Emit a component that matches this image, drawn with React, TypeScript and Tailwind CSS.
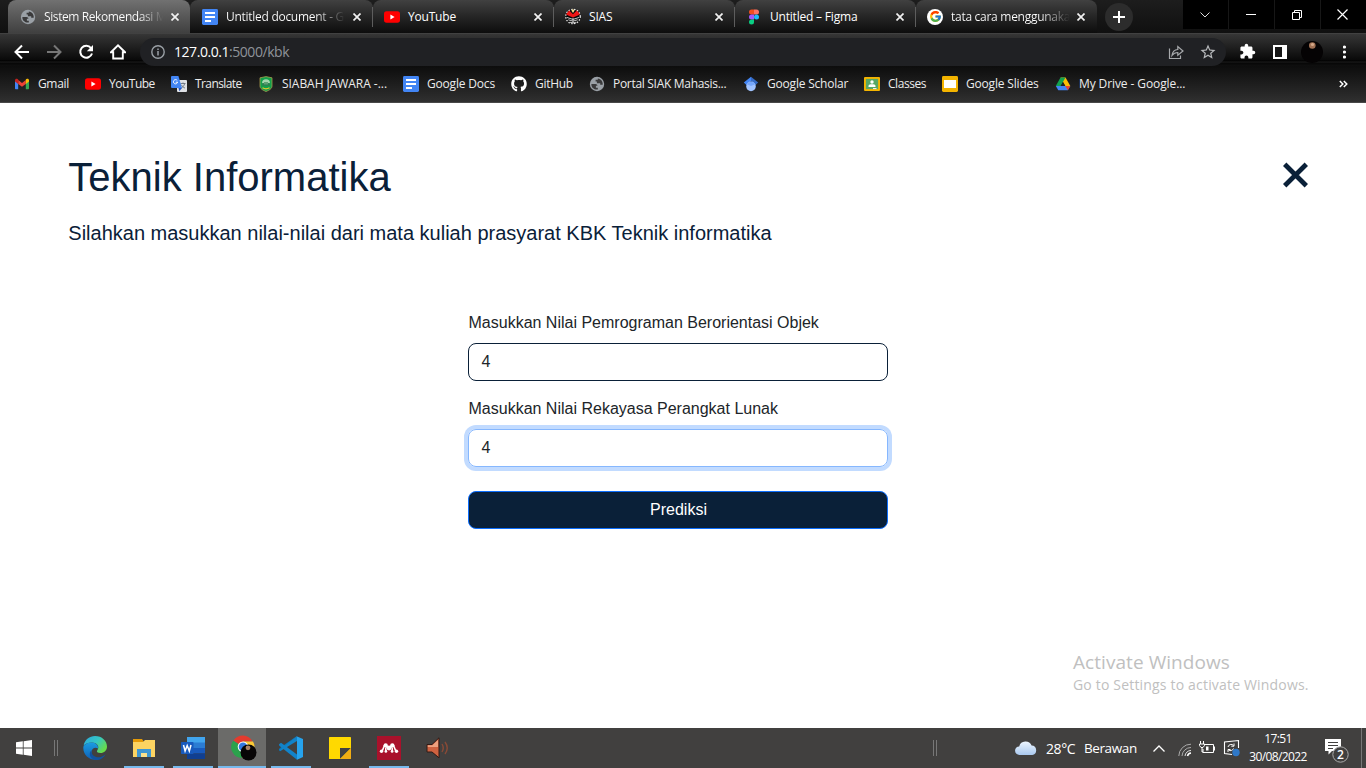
import React from "react";
import { FcGoogle } from "react-icons/fc";
import { FaGithub } from "react-icons/fa";
import { MdExtension, MdStarBorder } from "react-icons/md";

function Globe() {
  return (
    <svg width="16" height="16" viewBox="0 0 16 16" className="shrink-0">
      <circle cx="8" cy="8" r="7.2" fill="#9aa0a6" />
      <path d="M2.4 8h4c1.400 0 2 .8 2 1.800h-1.500v2H8.800v1.700C5 14 2.200 11.400 2.400 8z" fill="#3a3a3b" />
      <path d="M8.800 2.500v1.200H6.600v1.900h1.300v1.600h3.300v1.600h2.500C14 5.500 12 2.800 8.800 2.500z" fill="#3a3a3b" />
    </svg>
  );
}

function Docs() {
  return (
    <svg width="16" height="16" viewBox="0 0 16 16" className="shrink-0">
      <rect width="16" height="16" rx="1.4" fill="#4285f4" />
      <path d="M3 3h10v2H3zM3 7h10v2H3zM3 11h6v2H3z" fill="#fff" />
    </svg>
  );
}

function YouTube() {
  return (
    <svg width="16" height="16" viewBox="0 0 16 16" className="shrink-0">
      <rect y="2.3" width="16" height="11.4" rx="2.6" fill="#f00" />
      <path d="M6.4 5.6v4.8L10.6 8z" fill="#fff" />
    </svg>
  );
}

function Sias() {
  return (
    <svg width="16" height="17" viewBox="0 0 17 17" className="shrink-0">
      <circle cx="8.5" cy="8.5" r="7.700" fill="#080808" stroke="#eee" strokeWidth="1.300" strokeDasharray="1.6 1.5" />
      <path d="M1 6 L4.500 2 L8.500 6 L12.500 2 L16 6 L13 7.700 L8.500 9.600 L4 7.700Z" fill="#f01616" />
      <path d="M6.800 2.200 L8.500 4.800 L10.200 2.200 L8.500 .5Z" fill="#f7dc8a" />
      <path d="M2 9.500 L8.500 11.600 L15 9.500 M3.500 12 L8.500 13.400 L13.500 12 M5 14.500 L8.500 15.300 L12 14.500 M8.500 10v6" stroke="#cfcfcf" fill="none" />
    </svg>
  );
}

function Figma() {
  return (
    <svg width="16" height="16" viewBox="0 0 16 16" className="shrink-0">
      <path d="M8 .5H5.5a2.5 2.5 0 0 0 0 5H8z" fill="#f24e1e" />
      <path d="M8 .5h2.5a2.5 2.5 0 0 1 0 5H8z" fill="#ff7262" />
      <path d="M8 5.5H5.5a2.5 2.5 0 0 0 0 5H8z" fill="#a259ff" />
      <circle cx="10.5" cy="8" r="2.5" fill="#1abcfe" />
      <path d="M8 10.5H5.5A2.5 2.5 0 1 0 8 13z" fill="#0acf83" />
    </svg>
  );
}

function GoogleRound() {
  return (
    <span className="flex size-4 shrink-0 items-center justify-center rounded-full bg-white">
      <FcGoogle size={13} />
    </span>
  );
}

function Gmail() {
  return (
    <svg width="16" height="16" viewBox="0 0 16 16">
      <path d="M1 4v8.2c0 .6.4 1 1 1h2.2V6.4z" fill="#4285f4" />
      <path d="M15 4v8.2c0 .6-.4 1-1 1h-2.2V6.4z" fill="#34a853" />
      <path d="M4.2 4.1 8 7l3.8-2.9v3.8L8 10.8 4.2 7.9z" fill="#ea4335" />
      <path d="M1 4.2c0-1.4 1.5-2 2.5-1.2l.7.6v4.3L1 5.6z" fill="#c5221f" />
      <path d="M15 4.2c0-1.4-1.5-2-2.5-1.2l-.7.6v4.3L15 5.6z" fill="#fbbc04" />
    </svg>
  );
}

function Translate() {
  return (
    <svg width="16" height="16" viewBox="0 0 16 16">
      <rect x="6" y="4" width="10" height="12" rx="1" fill="#dfe1e5" />
      <path d="M9.5 7.5h5M12 6.5v1M13.6 7.8c-.6 2.2-2 3.6-3.6 4.2M10.4 8.8c.8 1.6 2 2.6 3.6 3.3" stroke="#68727e" fill="none" strokeWidth=".9" />
      <path d="M1 0h6.4l3.6 12H1a1 1 0 0 1-1-1V1a1 1 0 0 1 1-1z" fill="#4285f4" />
      <path d="M7.5 12H11l-2.6 3.2z" fill="#2457c5" />
      <path d="M6.3 4.6A2.1 2.1 0 1 0 6.6 6.2H4.7" stroke="#fff" fill="none" strokeWidth="1" />
    </svg>
  );
}

function Shield() {
  return (
    <svg width="16" height="16" viewBox="0 0 16 16">
      <path d="M2 1.800 8 .6l6 1.200V10c0 2.700-2.800 4.200-6 5.500C4.800 14.200 2 12.700 2 10z" fill="#12a04a" stroke="#a89b4c" strokeWidth=".8" />
      <path d="M4 7.200a4 4 0 0 1 8 0z" fill="#a5d6ae" />
      <path d="M4.200 7.200h7.600v2.600H4.200z" fill="#2f7f52" />
      <path d="M6 6h4v2.500H6z" fill="#5f9f74" />
      <path d="M4.500 11.800q3.500 2 7 0" stroke="#e4c72e" strokeWidth="1.300" fill="none" />
    </svg>
  );
}

function Scholar() {
  return (
    <svg width="16" height="16" viewBox="0 0 16 16">
      <path d="M8 .8.8 6.400 4 9.400 8 5z" fill="#4285f4" />
      <path d="m8 .8 7.200 5.600L12 9.400 8 5z" fill="#356ac3" />
      <circle cx="8" cy="10.400" r="4.800" fill="#a0c3ff" />
      <path d="M3.700 8.300a4.800 4.800 0 0 1 8.600 0L8 10z" fill="#76a7fa" />
    </svg>
  );
}

function Classes() {
  return (
    <svg width="16" height="16" viewBox="0 0 16 16">
      <rect y="1" width="16" height="14" rx="1" fill="#f4b400" />
      <rect x="1.900" y="2.900" width="12.200" height="10.200" fill="#57a765" />
      <circle cx="8" cy="6" r="1.700" fill="#fff" />
      <path d="M4.500 11V9.900C4.500 8.500 6.500 8.200 8 8.200s3.500.3 3.500 1.700V11z" fill="#fff" />
      <path d="M9 12h3.500v1.100H9z" fill="#eee" />
    </svg>
  );
}

function Slides() {
  return (
    <svg width="16" height="16" viewBox="0 0 16 16">
      <rect width="16" height="16" rx="1.400" fill="#f4b400" />
      <rect x="2" y="4" width="12" height="8" fill="#fff" />
    </svg>
  );
}

function Drive() {
  return (
    <svg width="16" height="16" viewBox="0 0 16 16">
      <path d="M5.500 1.500h5l4.800 8.500h-5z" fill="#fbbc04" />
      <path d="M5.500 1.500h5L5.600 10H.8z" fill="#12a150" />
      <path d="M.8 10h14.500l-2.500 4.300H3.300z" fill="#4285f4" />
      <path d="M10.300 10h5l-2.500 4.300z" fill="#ea4335" />
      <path d="M8 6.200 10.200 10H5.800z" fill="#222" />
    </svg>
  );
}

function Cross({ className = "" }: { className?: string }) {
  return (
    <svg width="8" height="8" viewBox="0 0 8 8" className={className}>
      <path d="M.5.5l7 7M7.500.5l-7 7" stroke="#f1f1f1" strokeWidth="1.700" />
    </svg>
  );
}

const tabs = [
  { icon: <Docs />, text: "Untitled document - G", fade: true },
  { icon: <YouTube />, text: "YouTube", fade: false },
  { icon: <Sias />, text: "SIAS", fade: false },
  { icon: <Figma />, text: "Untitled – Figma", fade: false },
  { icon: <GoogleRound />, text: "tata cara menggunaka", fade: true },
];

function TabStrip() {
  return (
    <div className="flex h-[33px] bg-gradient-to-b from-[#1d1d1d] to-[#101010] pl-2 text-[12px] tracking-[-0.28px]">
      <div className="flex h-[33px] w-[182px] shrink-0 items-center rounded-t-lg bg-gradient-to-b from-[#717171] to-[#404040] pl-3">
        <Globe />
        <span className="ml-2 w-[119px] overflow-hidden whitespace-nowrap bg-gradient-to-r from-white from-80% to-transparent to-100% bg-clip-text tracking-[-0.4px] text-transparent">
          Sistem Rekomendasi M
        </span>
        <Cross className="ml-2" />
      </div>
      {tabs.map((t, i) => (
        <div
          key={t.text}
          className={
            i === 0
              ? "flex h-[33px] w-[183px] shrink-0 items-center rounded-t-lg bg-gradient-to-b from-[#414141] to-[#0d0d0d]"
              : "flex h-[33px] w-[181px] shrink-0 items-center rounded-t-lg bg-gradient-to-b from-[#414141] to-[#0d0d0d]"
          }
        >
          <div className={i === 0 ? "flex min-w-0 grow items-center pl-3" : "flex min-w-0 grow items-center pl-[11px]"}>
            {t.icon}
            <span
              className={
                t.fade
                  ? "ml-2 w-[119px] overflow-hidden whitespace-nowrap bg-gradient-to-r from-white from-75% to-transparent to-100% bg-clip-text text-transparent"
                  : "ml-2 w-[119px] whitespace-nowrap tracking-[-0.2px] text-white"
              }
            >
              {t.text}
            </span>
            <Cross className={i === 0 ? "ml-2 shrink-0" : "ml-[7px] shrink-0"} />
          </div>
          {i < 4 && <div className="h-5 w-px bg-[#5d5d5d]" />}
        </div>
      ))}
      <div className="ml-2 mt-[3px] flex size-7 items-center justify-center rounded-full bg-[#2c2c2c]">
        <svg width="12" height="12" viewBox="0 0 12 12">
          <path d="M6 0v12M0 6h12" stroke="#fff" strokeWidth="2" />
        </svg>
      </div>
      <div className="ml-auto flex h-[29px] gap-px bg-[#171717]">
        <div className="flex w-[45px] items-center justify-center bg-black pr-px">
          <svg width="10" height="6" viewBox="0 0 10 6"><path d="M.5.5 5 5 9.500.5" stroke="#ddd" fill="none" /></svg>
        </div>
        <div className="flex w-[45px] items-center justify-center bg-black pr-px"><div className="h-px w-2.5 bg-white" /></div>
        <div className="flex w-[45px] items-center justify-center bg-black pr-px">
          <svg width="10" height="10" viewBox="0 0 10 10"><path d="M.5 2.500h7v7h-7zM2.500 2.500v-2h7v7h-2" stroke="#fff" fill="none" /></svg>
        </div>
        <div className="flex w-[45px] items-center justify-center bg-black pr-0.5">
          <svg width="11" height="11" viewBox="0 0 11 11"><path d="m.5.5 10 10m0-10-10 10" stroke="#fff" strokeWidth="1.200" /></svg>
        </div>
      </div>
    </div>
  );
}

function Toolbar() {
  return (
    <div className="flex h-[33px] items-center bg-[linear-gradient(#4c4c4c_0px,#363636_1px,#090909_27px,#000_28px,#1f1f1f_29px,#060606_30px,#101010_33px)] pt-1">
      <svg className="ml-[14px]" width="16" height="16" viewBox="0 0 16 16"><path d="M15 8H2M8 1.500 1.500 8 8 14.500" stroke="#fff" strokeWidth="2" fill="none" /></svg>
      <svg className="ml-4" width="16" height="16" viewBox="0 0 16 16"><path d="M1 8h13M8 1.500 14.500 8 8 14.500" stroke="#777" strokeWidth="2" fill="none" /></svg>
      <svg className="ml-4" width="16" height="16" viewBox="0 0 16 16"><path d="M13 4A6 6 0 1 0 14 9.500" stroke="#fff" strokeWidth="2" fill="none" /><path d="M15 1v6.200H8.800z" fill="#fff" /></svg>
      <svg className="ml-4" width="16" height="16" viewBox="0 0 16 16"><path d="M1 8.200 8 1.400l7 6.800h-2.200v6.300H3.200V8.200z" stroke="#fff" strokeWidth="1.900" fill="none" /></svg>
      <div className="ml-[14px] flex h-7 w-[1086px] items-center rounded-full bg-[#202124] pl-[11px]">
        <svg width="14" height="14" viewBox="0 0 14 14"><circle cx="7" cy="7" r="6.200" stroke="#9aa0a6" strokeWidth="1.400" fill="none" /><path d="M7 6v4.500M7 3.400v1.500" stroke="#9aa0a6" strokeWidth="1.500" /></svg>
        <span className="ml-[9px] whitespace-nowrap text-[14px] tracking-[-0.45px] text-[#8f949a]"><span className="text-white">127.0.0.1</span>:5000/kbk</span>
        <svg className="ml-auto" width="16" height="16" viewBox="0 0 16 16"><path d="M1.500 4.500v10h11v-3M4 11.500C4.500 7.500 6.500 5.700 9.800 5.500V2.500L15 7l-5.200 4.300V8.500C7 8.500 5.500 9.500 4 11.500z" stroke="#a7a9ac" strokeWidth="1.200" fill="none" /></svg>
        <MdStarBorder size={18} color="#b7b9bc" className="ml-[15px] mr-[9px]" />
      </div>
      <MdExtension size={17} color="#fff" className="ml-[13px]" />
      <svg className="ml-[17px]" width="14" height="14" viewBox="0 0 14 14"><path d="M0 0h14v14H0z" fill="#fff" /><path d="M2 2h7v10H2z" fill="#161616" /></svg>
      <svg className="ml-[14px]" width="22" height="22" viewBox="0 0 22 22"><circle cx="11" cy="11" r="11" fill="#050304" /><ellipse cx="11.300" cy="4.500" rx="3.300" ry="3.200" fill="#a27255" /><circle cx="11.500" cy="3.500" r="1.600" fill="#d5a98a" /></svg>
      <svg className="ml-5" width="4" height="14" viewBox="0 0 4 14"><circle cx="1.500" cy="2" r="1.600" fill="#fff" /><circle cx="1.500" cy="7" r="1.600" fill="#fff" /><circle cx="1.500" cy="12" r="1.600" fill="#fff" /></svg>
    </div>
  );
}

const bookmarks = [
  { icon: <Gmail />, text: "Gmail", w: "w-[71px] tracking-[-0.35px]" },
  { icon: <YouTube />, text: "YouTube", w: "w-[86px] tracking-[-0.5px]" },
  { icon: <Translate />, text: "Translate", w: "w-[87px] tracking-[-0.6px]" },
  { icon: <Shield />, text: "SIABAH JAWARA -...", w: "w-[145px] tracking-[-0.04px]" },
  { icon: <Docs />, text: "Google Docs", w: "w-[108px] tracking-[-0.18px]" },
  { icon: <FaGithub size={16} color="#fff" />, text: "GitHub", w: "w-[78px] tracking-[-0.3px]" },
  { icon: <Globe />, text: "Portal SIAK Mahasis...", w: "w-[154px] tracking-[-0.3px]" },
  { icon: <Scholar />, text: "Google Scholar", w: "w-[121px] tracking-[-0.2px]" },
  { icon: <Classes />, text: "Classes", w: "w-[78px] tracking-[-0.45px]" },
  { icon: <Slides />, text: "Google Slides", w: "w-[113px] tracking-[-0.18px]" },
  { icon: <Drive />, text: "My Drive - Google...", w: "w-[150px] tracking-[-0.1px]" },
];

function Bookmarks() {
  return (
    <div className="flex h-[37px] items-center border-b border-[#484848] bg-gradient-to-b from-[#0d0d0d] to-[#303030] pl-[14px] text-[12px] text-[#ececec]">
      {bookmarks.map((b) => (
        <div key={b.text} className={"flex shrink-0 items-center gap-2 whitespace-nowrap " + b.w}>
          {b.icon}
          <span>{b.text}</span>
        </div>
      ))}
      <svg className="ml-auto mr-[18px]" width="9" height="8" viewBox="0 0 9 8"><path d="m.8 1 3 3-3 3M4.800 1l3 3-3 3" stroke="#fff" strokeWidth="1.500" fill="none" /></svg>
    </div>
  );
}

function Page() {
  return (
    <main className="relative flex h-[625px] flex-col bg-white font-['Liberation_Sans',Arial,sans-serif] text-[#212529]">
      <header className="flex justify-between pl-[68.300px] pr-[57px] pt-[50px] text-[#0a2038]">
        <div>
          <h1 className="text-[40px] leading-[48px]">Teknik Informatika</h1>
          <p className="mt-[17px] text-[20px] leading-[30px]">Silahkan masukkan nilai-nilai dari mata kuliah prasyarat KBK Teknik informatika</p>
        </div>
        <svg className="mt-[9px]" width="27" height="27" viewBox="0 0 27 27"><path d="m2.700 2.200 21.600 21.600m0-21.600L2.700 23.800" stroke="#0a2038" strokeWidth="4.800" /></svg>
      </header>
      <form className="ml-[468px] mt-[63px] flex w-[420px] flex-col text-[16px] leading-6">
        <label className="mb-2 pl-[0.500px]">Masukkan Nilai Pemrograman Berorientasi Objek</label>
        <div className="mb-4 h-[38px] rounded-lg border border-[#0a2038] px-[12.500px] py-1.5">4</div>
        <label className="mb-2 pl-[0.500px]">Masukkan Nilai Rekayasa Perangkat Lunak</label>
        <div className="mb-6 h-[38px] rounded-lg border border-[#86b7fe] px-[12.500px] py-1.5 shadow-[0_0_0_4px_#c2dbff]">4</div>
        <button type="button" className="h-[38px] rounded-lg border border-[#0d6efd] bg-[#0a2038] pl-px text-white">Prediksi</button>
      </form>
      <div className="absolute left-[1073px] top-[547px] whitespace-nowrap font-['Open_Sans','Noto_Sans',sans-serif] text-[#c0c0c0]">
        <div className="text-[19px] leading-6 tracking-[0.060px]">Activate Windows</div>
        <div className="text-[14px] leading-[21px] tracking-[0.180px]">Go to Settings to activate Windows.</div>
      </div>
    </main>
  );
}

function TaskItem({ children, open, active }: { children: React.ReactNode; open?: boolean; active?: boolean }) {
  return (
    <div className={active ? "flex h-10 w-12 flex-col items-center bg-[#6b6b69]" : "flex h-10 w-12 flex-col items-center"}>
      <div className="flex h-[38px] items-center pt-[2px]">{children}</div>
      {(open || active) && <div className={active ? "h-0.5 w-12 bg-[#76b9ed]" : "h-0.5 w-10 bg-[#76b9ed]"} />}
    </div>
  );
}

function Taskbar() {
  return (
    <footer className="flex h-10 items-center bg-[#41403f] text-white">
      <svg className="ml-4" width="16" height="16" viewBox="0 0 16 16"><path d="M0 2.300 6.800 1.300v6.300H0zM7.600 1.200 16 0v7.600H7.600zM0 8.400h6.800v6.300L0 13.700zM7.600 8.400H16V16l-8.400-1.200z" fill="#fff" /></svg>
      <div className="ml-[22px] mr-[13px] flex h-4 w-1 shrink-0 justify-between"><i className="w-px bg-[#777]" /><i className="w-px bg-[#777]" /></div>
      <div className="flex gap-px">
        <TaskItem>
          <svg width="24" height="24" viewBox="0 0 24 24">
            <defs>
              <linearGradient id="edgeTop" x1="0" y1="0" x2="1" y2=".6"><stop offset="0" stopColor="#2ba7de" /><stop offset=".55" stopColor="#35c6c4" /><stop offset="1" stopColor="#68dc4a" /></linearGradient>
              <linearGradient id="edgeLow" x1="0" y1="0" x2="0" y2="1"><stop offset="0" stopColor="#1b9de2" /><stop offset="1" stopColor="#0e5fb6" /></linearGradient>
            </defs>
            <path d="M.6 9.500C2 3.500 6.500 0 12 0c7 0 12 5 12 10.500 0 4-3 6.500-6.500 6.500-3 0-4.200-1.200-3.300-2.500C17.500 10 13 6.500 9 6.500c-3.500 0-6.400 1.100-8.400 3z" fill="url(#edgeTop)" />
            <path d="M.3 12C0 8.500 4.500 6.400 8.800 6.400c4.200 0 6.600 3 6.200 6-3.500-2-7 .8-6.500 4.500.6 4 4.500 7.300 7.500 6.200C8.500 26 .4 20 .3 12z" fill="url(#edgeLow)" />
            <path d="M8.500 14.200c-.5 3 1.500 6.500 5.500 7 3 .4 6-.7 8.700-3C20 23 15.500 24.800 12 23.800c-6.500-2-6-7.500-3.500-9.600z" fill="#12529e" />
          </svg>
        </TaskItem>
        <TaskItem open>
          <svg width="22" height="20" viewBox="0 0 22 20"><path d="M0 1h9l2 3H0z" fill="#e69b08" /><path d="M0 4h10l2-2h10v17H0z" fill="#fcd462" /><path d="M4 19v-8h14v8h-4v-4H8v4z" fill="#3f97d3" /><path d="M8 15h6v4H8z" fill="#fce18c" /></svg>
        </TaskItem>
        <TaskItem open>
          <svg width="24" height="22" viewBox="0 0 24 22"><path d="M6 0h18v6H6z" fill="#41a5ee" /><path d="M6 5.500h18V11H6z" fill="#2b7cd3" /><path d="M6 11h18v5.500H6z" fill="#185abd" /><path d="M6 16.500h18V22H6z" fill="#103f91" /><rect y="5" width="12.500" height="12" rx=".8" fill="#185abd" /><path d="m2.500 8 1.600 6 2.100-5.500 2.100 5.500 1.700-6" stroke="#fff" strokeWidth="1.500" fill="none" /></svg>
        </TaskItem>
        <TaskItem active>
          <svg className="ml-[3px]" width="26" height="26" viewBox="0 0 26 26">
            <path d="M12 12 2.500 5.500a11 11 0 0 1 19 1H12z" fill="#e33b2e" />
            <path d="m12 12-9.800-6.300A11 11 0 0 0 11 23l5-8z" fill="#2ba24c" />
            <path d="M12 6.500h10A11 11 0 0 1 11 23l6-9z" fill="#fcc934" />
            <circle cx="12" cy="11.800" r="5.300" fill="#fff" /><circle cx="12" cy="11.800" r="4.300" fill="#3478df" />
            <circle cx="17.500" cy="17.500" r="8" fill="#080606" /><circle cx="17" cy="12.800" r="2.400" fill="#a98063" />
          </svg>
        </TaskItem>
        <TaskItem open>
          <svg width="24" height="24" viewBox="0 0 24 24"><path d="M17.500.3 1 15.300l-1-1.100v-1.300l2.200-2z" fill="#0879be" /><path d="m0 8.300 2-1.600L18 18.500v5.300L.3 9.700z" fill="#1283ca" /><path d="M17.500.3 24 3v18l-6.500 2.900c.5-.2.7-.7.500-1.200V1.400c0-.5-.2-.9-.5-1.100z" fill="#26a3ed" /><path d="M1 15.300 18 5V0L1.500 13.200z" fill="#1183c9" /></svg>
        </TaskItem>
        <TaskItem>
          <svg width="22" height="22" viewBox="0 0 22 22"><rect width="22" height="22" rx=".6" fill="#ffd900" /><path d="M11 11h11L11 22z" fill="#424242" /><path d="M22 11v11H11z" fill="#f0ad13" /></svg>
        </TaskItem>
        <TaskItem open>
          <svg width="24" height="24" viewBox="0 0 24 24"><path d="M0 0h24v24H0z" fill="#a9112b" /><g fill="#fff"><path d="M5 15.500 7.500 9.500 12 12l4.500-2.500 2.500 6M8.800 11.500v3.700M15.200 11.500v3.700" fill="none" stroke="#fff" strokeWidth="1.600" /><circle cx="8.700" cy="9.300" r="2.100" /><circle cx="15.300" cy="9.300" r="2.100" /><circle cx="12" cy="12" r="2.400" /><circle cx="4.500" cy="15.300" r="1.700" /><circle cx="8.900" cy="15.400" r="1.400" /><circle cx="15.100" cy="15.400" r="1.400" /><circle cx="19.500" cy="15.300" r="1.700" /></g></svg>
        </TaskItem>
        <TaskItem>
          <svg width="24" height="22" viewBox="0 0 24 22"><path d="M1 7.500h5L13 .8v20L6 15H1z" fill="#cf6240" stroke="#301a16" /><path d="M1.800 8.300h4.600L12 3v7H1.800z" fill="#eda17f" /><path d="M16 7q2.500 4 0 8M19 5q4.500 6 0 12" stroke="#8a4a36" strokeWidth="1.400" fill="none" /></svg>
        </TaskItem>
      </div>
      <div className="ml-auto flex h-10 items-center font-['Open_Sans','Noto_Sans',sans-serif]">
        <div className="mr-[78px] flex h-4 w-1 shrink-0 justify-between"><i className="w-px bg-[#777]" /><i className="w-px bg-[#777]" /></div>
        <svg width="22" height="16" viewBox="0 0 22 16"><defs><linearGradient id="cloud" x1="0" y1="0" x2="0" y2="1"><stop stopColor="#edf6ff" /><stop offset="1" stopColor="#a9c8ee" /></linearGradient></defs><path d="M4.500 15a4.300 4.300 0 0 1-.3-8.600A6.600 6.600 0 0 1 16.600 5.500 4.800 4.800 0 0 1 17.300 15z" fill="url(#cloud)" /></svg>
        <span className="ml-[9px] w-[38px] pt-px text-[14px] tracking-[-0.4px]">28°C</span>
        <span className="w-[69px] pt-px text-[13.500px] tracking-[-0.4px]">Berawan</span>
        <svg width="12" height="7" viewBox="0 0 12 7"><path d="M.5 6.500 6 1l5.500 5.500" stroke="#fff" strokeWidth="1.300" fill="none" /></svg>
        <svg className="ml-[13px] mt-[3px]" width="14" height="14" viewBox="0 0 14 14" fill="none" stroke="#aaa"><path d="M.8 13A12 12 0 0 1 13 1.200" /><path d="M4 13a9 9 0 0 1 9-8.500" /><path d="M7 13a6 6 0 0 1 6-5.500" stroke="#ddd" /><path d="M9.500 13a4 4 0 0 1 3.500-3" stroke="#fff" strokeWidth="1.500" /></svg>
        <svg className="ml-[7px]" width="16" height="14" viewBox="0 0 16 14"><path d="M5.500 3.500h9v8H4V8" stroke="#fff" fill="none" /><path d="M7 5.500h2.500v4H7z" fill="#fff" /><path d="M15 5.500h1v4h-1z" fill="#fff" /><path d="M1.500 0v3M4.500 0v3M.5 3h5v1.500L4 6.500H2L.5 4.500zM3 6v5h1" stroke="#fff" fill="none" /></svg>
        <svg className="ml-2" width="18" height="18" viewBox="0 0 18 18"><path d="M15.500 9V1.500L1.500 3v11.500L9 15.500" stroke="#fff" fill="none" strokeWidth="1.100" /><path d="M5 8a3.200 3.200 0 0 1 5.500-1.500M11 4.500v2.700H8.300M10.500 9.500A3.200 3.200 0 0 1 5.500 11M5 13v-2.500h2.500" stroke="#fff" fill="none" /><circle cx="13" cy="13.500" r="3.700" fill="#2f78c8" /></svg>
        <div className="ml-[5px] flex w-[64px] flex-col items-center whitespace-nowrap text-[12px] leading-[18px] tracking-[-0.6px]"><span>17:51</span><span>30/08/2022</span></div>
        <div className="relative ml-[15px] mt-1.5 h-6 w-6">
          <svg width="24" height="24" viewBox="0 0 24 24"><path d="M0 0h16v12H7l-3.500 3.500V12H0z" fill="#fff" /><path d="M3 3.500h10M3 6.500h10M3 9.500h5" stroke="#41403f" /><circle cx="15.500" cy="15.500" r="7.700" fill="#41403f" stroke="#aaa" /></svg>
          <span className="absolute left-3 top-2 text-[12px] font-semibold leading-[15px]">2</span>
        </div>
        <div className="ml-3 mr-1 h-10 w-px bg-[#777]" />
      </div>
    </footer>
  );
}

export default function App() {
  return (
    <div className="h-[768px] w-[1366px] overflow-hidden font-['Open_Sans','Noto_Sans',sans-serif]">
      <TabStrip />
      <Toolbar />
      <Bookmarks />
      <Page />
      <Taskbar />
    </div>
  );
}
